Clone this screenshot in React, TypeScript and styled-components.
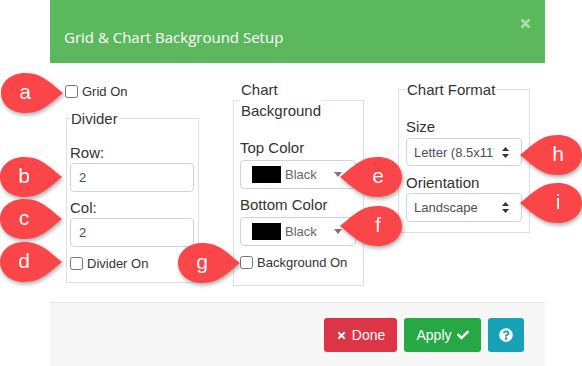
import React from 'react';
import styled, { createGlobalStyle } from 'styled-components';
import { FaTimes, FaCheck, FaQuestionCircle } from 'react-icons/fa';

const GlobalStyle = createGlobalStyle`
  html, body {
    margin: 0;
    padding: 0;
    background: #fff;
  }
  body {
    font-family: 'Liberation Sans', Arial, sans-serif;
    color: #333;
  }
  * {
    box-sizing: border-box;
  }
`;

const Stage = styled.div`
  position: relative;
  width: 582px;
  height: 366px;
  overflow: hidden;
`;

const Modal = styled.div`
  margin-left: 50px;
  width: 495px;
  height: 366px;
  display: flex;
  flex-direction: column;
`;

const Header = styled.div`
  height: 63px;
  flex: none;
  background: #5cb85c;
  display: flex;
  justify-content: space-between;
  align-items: flex-start;
  padding: 0 15px 0 14px;
`;

const Title = styled.h4`
  margin: 0;
  padding-top: 26px;
  font-family: 'Open Sans', sans-serif;
  font-size: 15px;
  font-weight: 400;
  line-height: 22px;
  color: #fff;
`;

const Close = styled.span`
  margin-top: 19px;
  color: rgba(255, 255, 255, 0.5);
  display: flex;
`;

const Body = styled.div`
  height: 239px;
  flex: none;
  display: grid;
  grid-template-columns: 167px 165px 160px;
  align-items: start;
  padding: 16px 0 0 16px;
`;

const Column = styled.div`
  display: flex;
  flex-direction: column;
  align-items: flex-start;
`;

const CheckRow = styled.label<{ $top?: number; $left?: number }>`
  display: flex;
  align-items: center;
  gap: 4px;
  margin-top: ${p => p.$top ?? 0}px;
  margin-left: ${p => p.$left ?? 0}px;
  font-size: 13px;
  line-height: 21px;
  color: #333;

  input {
    margin: 0;
    width: 13px;
    height: 13px;
  }
`;

const Group = styled.fieldset<{ $w: number; $pl: number; $pr: number; $pb: number; $top?: number }>`
  width: ${p => p.$w}px;
  margin: ${p => p.$top ?? 0}px 0 0;
  padding: 0 ${p => p.$pr}px ${p => p.$pb}px ${p => p.$pl}px;
  border: 1px solid #dcdfe3;
  min-width: 0;
`;

const Legend = styled.legend`
  padding: 0 1px;
  font-size: 15px;
  line-height: 21px;
  color: #333;
`;

const FieldLabel = styled.div<{ $top: number }>`
  margin-top: ${p => p.$top}px;
  font-size: 15px;
  line-height: 21px;
  color: #333;
`;

const TextInput = styled.input`
  display: block;
  width: 100%;
  height: 29px;
  margin: 0;
  padding: 0 8px;
  border: 1px solid #ced4da;
  border-radius: 4px;
  font-family: 'Liberation Sans', Arial, sans-serif;
  font-size: 13px;
  color: #495057;
  background: #fff;
`;

const SelectBox = styled.div<{ $h: number; $top: number }>`
  display: flex;
  align-items: center;
  height: ${p => p.$h}px;
  margin-top: ${p => p.$top}px;
  padding: 0 12px 0 7px;
  border: 1px solid #ced4da;
  border-radius: 4px;
  font-size: 13px;
  color: #495057;
  background: #fff;
  white-space: nowrap;
`;

const SelectText = styled.span`
  width: 80px;
  flex: none;
  overflow: hidden;
  margin-right: auto;
`;

const ColorBox = styled(SelectBox)`
  padding: 0 13px 0 11px;
  color: #666;
`;

const Swatch = styled.span<{ $color: string }>`
  width: 29px;
  height: 17px;
  background: ${p => p.$color};
  margin-right: 4px;
`;

const Caret = styled.span`
  margin-left: auto;
  width: 0;
  height: 0;
  border-left: 4px solid transparent;
  border-right: 4px solid transparent;
  border-top: 5px solid #777;
`;

const Footer = styled.div`
  flex: 1;
  border-top: 1px solid #e5e5e5;
  background: #f7f7f7;
  display: flex;
  justify-content: flex-end;
  align-items: flex-start;
  gap: 7px;
  padding: 15px 21px 0 0;
`;

const Button = styled.button<{ $bg: string; $w: number }>`
  width: ${p => p.$w}px;
  height: 34px;
  padding: 0;
  border: none;
  border-radius: 3px;
  background: ${p => p.$bg};
  color: #fff;
  font-family: 'Liberation Sans', Arial, sans-serif;
  font-size: 14px;
  display: inline-flex;
  align-items: center;
  justify-content: center;
  gap: 5px;
`;

const Pin = styled.div<{ $x: number; $y: number }>`
  position: absolute;
  left: ${p => p.$x}px;
  top: ${p => p.$y}px;
  width: 62px;
  height: 40px;
  filter: drop-shadow(1px 2px 2px rgba(0, 0, 0, 0.35));
`;

const PinShape = styled.svg<{ $flip: boolean }>`
  display: block;
  transform: ${p => (p.$flip ? 'scaleX(-1)' : 'none')};
`;

const PinLetter = styled.span<{ $flip: boolean }>`
  position: absolute;
  top: 0;
  ${p => (p.$flip ? 'right' : 'left')}: 0;
  width: 48px;
  height: 38px;
  display: flex;
  align-items: center;
  justify-content: center;
  color: #fff;
  font-size: 21px;
`;

const Marker: React.FC<{ letter: string; x: number; y: number; flip?: boolean }> = ({ letter, x, y, flip = false }) => (
  <Pin $x={x} $y={y}>
    <PinShape $flip={flip} width="62" height="40" viewBox="0 0 62 40">
      <path
        d="M62 20 C50 11 42 0 24 0 C10 0 0 9 0 20 C0 31 10 40 24 40 C42 40 50 29 62 20 Z"
        fill="#fa4549"
      />
    </PinShape>
    <PinLetter $flip={flip}>{letter}</PinLetter>
  </Pin>
);

const UpDown = () => (
  <svg width="7" height="11" viewBox="0 0 7 11">
    <path d="M3.5 0 L7 4 L0 4 Z M0 7 L7 7 L3.5 11 Z" fill="#333" />
  </svg>
);

const CloseIcon = () => (
  <svg width="9" height="9" viewBox="0 0 9 9">
    <path d="M1 1 L8 8 M8 1 L1 8" stroke="currentColor" strokeWidth="2.6" strokeLinecap="round" />
  </svg>
);

export default function App() {
  return (
    <Stage>
      <GlobalStyle />
      <Modal>
        <Header>
          <Title>Grid &amp; Chart Background Setup</Title>
          <Close>
            <CloseIcon />
          </Close>
        </Header>

        <Body>
          <Column>
            <CheckRow $top={2} $left={-1}>
              <input type="checkbox" />
              Grid On
            </CheckRow>
            <Group $w={133} $pl={3} $pr={4} $pb={8} $top={6}>
              <Legend>Divider</Legend>
              <FieldLabel $top={13}>Row:</FieldLabel>
              <TextInput defaultValue="2" />
              <FieldLabel $top={5}>Col:</FieldLabel>
              <TextInput defaultValue="2" />
              <CheckRow $top={6}>
                <input type="checkbox" />
                Divider On
              </CheckRow>
            </Group>
          </Column>

          <Column>
            <Group $w={131} $pl={6} $pr={7} $pb={12}>
              <Legend>
                Chart
                <br />
                Background
              </Legend>
              <FieldLabel $top={16}>Top Color</FieldLabel>
              <ColorBox $h={29} $top={2}>
                <Swatch $color="#000" />
                Black
                <Caret />
              </ColorBox>
              <FieldLabel $top={5}>Bottom Color</FieldLabel>
              <ColorBox $h={29} $top={2}>
                <Swatch $color="#000" />
                Black
                <Caret />
              </ColorBox>
              <CheckRow $top={6}>
                <input type="checkbox" />
                Background On
              </CheckRow>
            </Group>
          </Column>

          <Column>
            <Group $w={132} $pl={7} $pr={7} $pb={10}>
              <Legend>Chart Format</Legend>
              <FieldLabel $top={16}>Size</FieldLabel>
              <SelectBox $h={28} $top={1}>
                <SelectText>Letter (8.5x11)</SelectText>
                <UpDown />
              </SelectBox>
              <FieldLabel $top={6}>Orientation</FieldLabel>
              <SelectBox $h={29} $top={0}>
                <SelectText>Landscape</SelectText>
                <UpDown />
              </SelectBox>
            </Group>
          </Column>
        </Body>

        <Footer>
          <Button $bg="#dc3545" $w={73}>
            <FaTimes size={11} />
            Done
          </Button>
          <Button $bg="#28a745" $w={77}>
            Apply
            <FaCheck size={12} />
          </Button>
          <Button $bg="#17a2b8" $w={36}>
            <FaQuestionCircle size={14} />
          </Button>
        </Footer>
      </Modal>

      <Marker letter="a" x={1} y={73} />
      <Marker letter="b" x={0} y={157} />
      <Marker letter="c" x={0} y={199} />
      <Marker letter="d" x={0} y={242} />
      <Marker letter="g" x={178} y={243} />
      <Marker letter="e" x={340} y={157} flip />
      <Marker letter="f" x={340} y={206} flip />
      <Marker letter="h" x={520} y={135} flip />
      <Marker letter="i" x={520} y={183} flip />
    </Stage>
  );
}
